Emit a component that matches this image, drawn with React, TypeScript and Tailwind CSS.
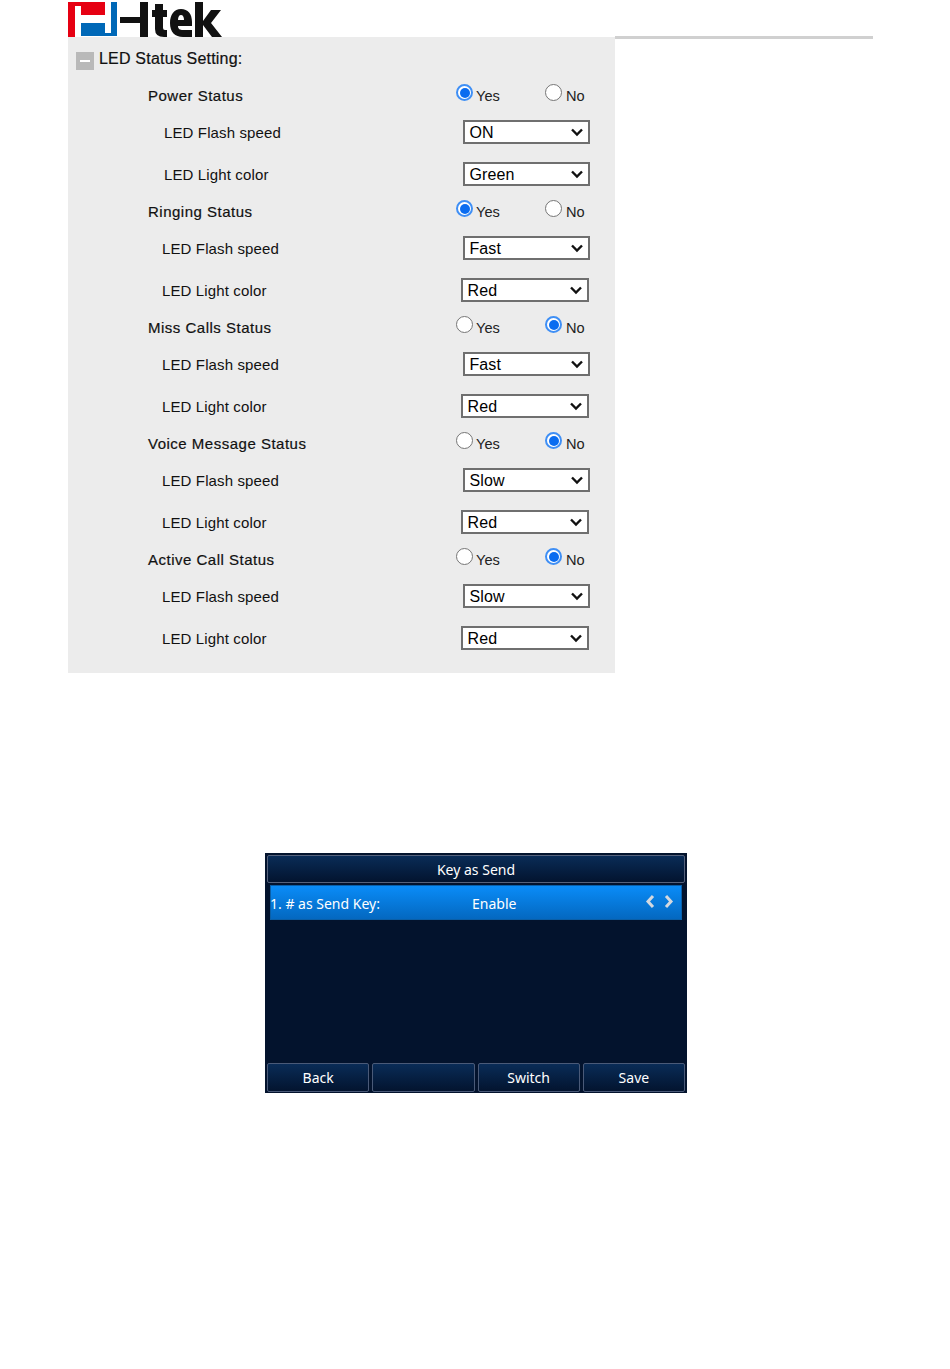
const font = { fontFamily: '"Liberation Sans", Arial, sans-serif' }
const phoneFont = { fontFamily: '"Noto Sans", "Open Sans", sans-serif' }

interface LedGroup {
  title: string
  on: 'yes' | 'no'
  speed: string
  color: string
  labelX: string
  speedX: string
  colorX: string
}

const groups: LedGroup[] = [
  { title: 'Power Status', on: 'yes', speed: 'ON', color: 'Green', labelX: 'pl-[96px]', speedX: 'ml-[395px] w-[127px]', colorX: 'ml-[395px] w-[127px]' },
  { title: 'Ringing Status', on: 'yes', speed: 'Fast', color: 'Red', labelX: 'pl-[94px]', speedX: 'ml-[395px] w-[127px]', colorX: 'ml-[393px] w-[128px]' },
  { title: 'Miss Calls Status', on: 'no', speed: 'Fast', color: 'Red', labelX: 'pl-[94px]', speedX: 'ml-[395px] w-[127px]', colorX: 'ml-[393px] w-[128px]' },
  { title: 'Voice Message Status', on: 'no', speed: 'Slow', color: 'Red', labelX: 'pl-[94px]', speedX: 'ml-[395px] w-[127px]', colorX: 'ml-[393px] w-[128px]' },
  { title: 'Active Call Status', on: 'no', speed: 'Slow', color: 'Red', labelX: 'pl-[94px]', speedX: 'ml-[395px] w-[127px]', colorX: 'ml-[393px] w-[128px]' }
]

const Radio = ({ checked }: { checked: boolean }) =>
  checked ? (
    <span className="w-[17px] h-[17px] rounded-full border-2 border-[#3f8ff5] bg-white flex items-center justify-center">
      <span className="w-[10px] h-[10px] rounded-full bg-[#0a6cf0]" />
    </span>
  ) : (
    <span className="block w-[17px] h-[17px] rounded-full border border-[#767676] bg-white" />
  )

const Select = ({ value, className }: { value: string; className: string }) => (
  <div className={`h-[24px] border-2 border-[#6f6f6f] bg-white flex items-center justify-between pl-[4.5px] pr-[4px] text-[16px] tracking-[0.1px] text-black ${className}`}>
    <span className="pt-[1px]">{value}</span>
    <svg width="14" height="10" viewBox="0 0 14 10" fill="none" stroke="#111" strokeWidth="2.4">
      <path d="M2 2.5 7 7.5 12 2.5" />
    </svg>
  </div>
)

const Row = ({ children, label, className }: { children?: React.ReactNode; label: string; className: string }) => (
  <div className="relative h-[42px] flex items-center">
    <span className={`absolute left-0 top-[11px] text-[15px] tracking-[0.13px] text-[#111] ${className}`}>{label}</span>
    {children}
  </div>
)

const Logo = () => (
  <svg width="154" height="37" viewBox="0 0 154 37" className="block">
    <path d="M0 2H37V15H13V6H7V37H0Z" fill="#e60012" />
    <path d="M13 23H37V33H43V2H49V36H13Z" fill="#0068b7" />
    <rect x="52" y="17" width="20" height="6" fill="#111" />
    <rect x="72" y="2" width="8" height="35" fill="#111" />
    <path d="M87 4H95V10H99V17H95V28Q95 30 97 30H99V37H96Q87 37 87 29V17H84V10H87Z" fill="#111" />
    <path fillRule="evenodd" d="M113 9C106 9 102 15 102 23C102 32 107 37 115 37H124V30H115C112 30 110 29 110 26H124V22C124 14 120 9 113 9ZM110 20C110 17 111 15 113 15C115 15 116 17 116 20Z" fill="#111" />
    <path d="M127 2H135V21L143 10H153L143 23L154 37H144L135 25V37H127Z" fill="#111" />
  </svg>
)

const PhoneButton = ({ label }: { label?: string }) => (
  <div className="h-[29px] flex-1 rounded-[2px] border border-[#4a5a78] bg-gradient-to-b from-[#0a2c57] to-[#03142f] flex items-center justify-center text-white text-[14px]">
    {label}
  </div>
)

export default function App() {
  return (
    <div className="w-[950px] h-[1369px] bg-white" style={font}>
      <div className="pl-[68px]">
        <Logo />
      </div>
      <div className="flex items-start">
        <div className="ml-[68px] w-[547px] h-[636px] bg-[#ececec]">
          <div className="h-[42px] flex items-center pl-[8px] pt-[2px]">
            <span className="w-[18px] h-[18px] bg-[#b9b9b9] flex items-center justify-center mr-[5px] mt-[3px]">
              <span className="w-[10px] h-[2px] bg-white" />
            </span>
            <span className="text-[16px] tracking-[0.2px] text-[#111] [-webkit-text-stroke:0.2px_#111]">LED Status Setting:</span>
          </div>
          {groups.map((group) => (
            <div key={group.title}>
              <div className="relative h-[32px]">
                <span className="absolute left-[80px] top-[6px] text-[15px] tracking-[0.5px] text-[#111] [-webkit-text-stroke:0.2px_#111]">{group.title}</span>
                <span className="absolute left-[388px] top-[5px]">
                  <Radio checked={group.on === 'yes'} />
                </span>
                <span className="absolute left-[408px] top-[7px] text-[14.6px] text-[#222]">Yes</span>
                <span className="absolute left-[477px] top-[5px]">
                  <Radio checked={group.on === 'no'} />
                </span>
                <span className="absolute left-[498px] top-[7px] text-[14.6px] text-[#222]">No</span>
              </div>
              <Row label="LED Flash speed" className={group.labelX}>
                <Select value={group.speed} className={group.speedX} />
              </Row>
              <Row label="LED Light color" className={group.labelX}>
                <Select value={group.color} className={group.colorX} />
              </Row>
            </div>
          ))}
        </div>
        <div className="w-[258px] h-[3px] -mt-[1px] bg-[#d0d0d0]" />
      </div>
      <div className="ml-[265px] mt-[180px] w-[422px] h-[240px] bg-[#03132d] flex flex-col px-[2px] pt-[2px] pb-[1px]" style={phoneFont}>
        <div className="h-[28px] rounded-[2px] border border-[#56627c] bg-gradient-to-b from-[#0a2c57] to-[#03142f] flex items-center justify-center text-white text-[14px]">
          Key as Send
        </div>
        <div className="relative mx-[3px] mt-[2px] h-[35px] border border-[#0a5fa8] bg-gradient-to-b from-[#0a8cf8] to-[#0468c0] flex items-center text-white text-[14px] pt-[1px]">
          <span className="-ml-[1px]">1. # as Send Key:</span>
          <span className="absolute left-[201px]">Enable</span>
          <svg className="absolute right-[6px] top-[8px]" width="30" height="15" viewBox="0 0 30 15" fill="none" stroke="#d4d9df" strokeWidth="3">
            <path d="M8 2 3 7.5 8 13" />
            <path d="M21 2 26 7.5 21 13" />
          </svg>
        </div>
        <div className="flex-1" />
        <div className="flex gap-[3px]">
          <PhoneButton label="Back" />
          <PhoneButton />
          <PhoneButton label="Switch" />
          <PhoneButton label="Save" />
        </div>
      </div>
    </div>
  )
}
